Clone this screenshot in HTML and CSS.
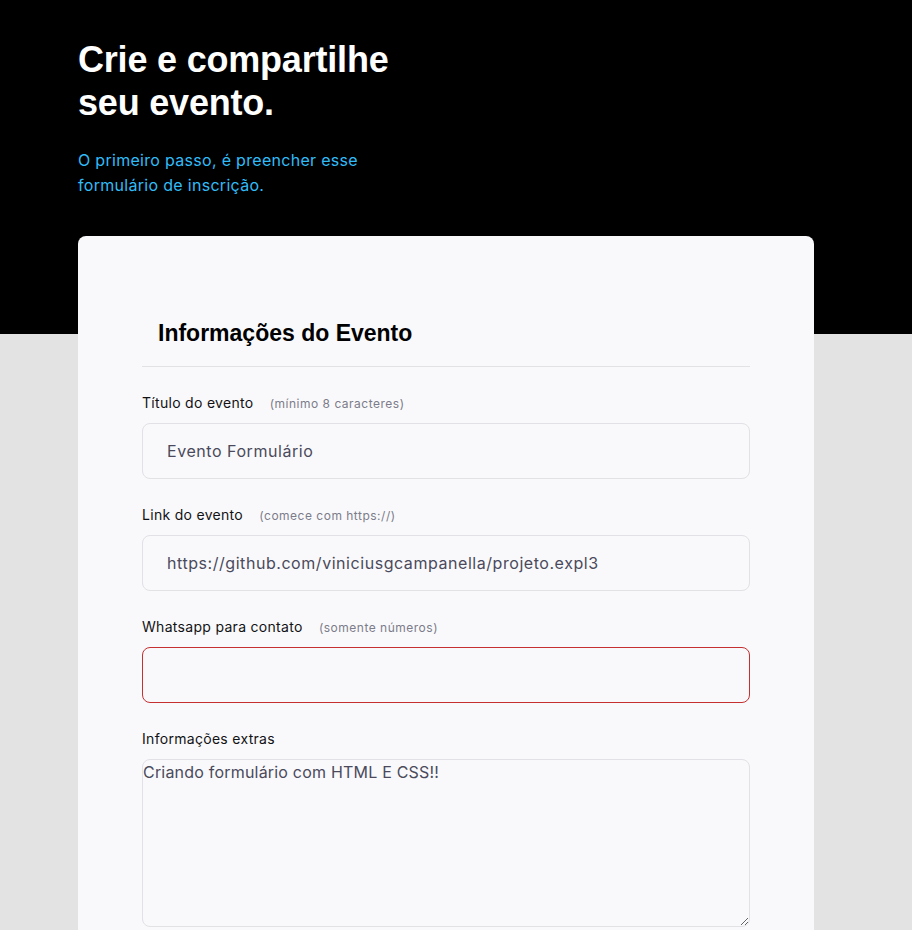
FILE: index.html
```html
<!DOCTYPE html>
<html lang="pt-BR">
<head>
<meta charset="utf-8">
<title>Crie e compartilhe seu evento</title>
<link rel="stylesheet" href="styles.css">
</head>
<body>
<header class="hero">
  <div class="hero-inner">
    <h1 class="hero-title">Crie e compartilhe<br>seu evento.</h1>
    <p class="hero-sub">O primeiro passo, é preencher esse<br>formulário de inscrição.</p>
  </div>
</header>
<main class="page">
  <form class="card">
    <h2 class="card-title">Informações do Evento</h2>
    <div class="fields">
      <div class="field">
        <label class="label" for="titulo">Título do evento <span class="hint">(mínimo 8 caracteres)</span></label>
        <input class="input" id="titulo" type="text" value="Evento Formulário">
      </div>
      <div class="field">
        <label class="label" for="link">Link do evento <span class="hint">(comece com https://)</span></label>
        <input class="input" id="link" type="text" value="https://github.com/viniciusgcampanella/projeto.expl3">
      </div>
      <div class="field">
        <label class="label" for="whats">Whatsapp para contato <span class="hint">(somente números)</span></label>
        <input class="input input-error" id="whats" type="text" value="">
      </div>
      <div class="field">
        <label class="label" for="extras">Informações extras</label>
        <textarea class="textarea" id="extras">Criando formulário com HTML E CSS!!</textarea>
      </div>
    </div>
  </form>
</main>
</body>
</html>
```
FILE: styles.css
```css
* { box-sizing: border-box; }
html, body { margin: 0; padding: 0; }
body {
  background: #e3e3e3;
  font-family: Inter, "Noto Sans", sans-serif;
  color: #121214;
}
.hero {
  background: #000;
  height: 334px;
}
.hero-inner {
  padding: 38px 78px 0;
}
.hero-title {
  margin: 0;
  font-family: "Liberation Sans", Arial, sans-serif;
  font-weight: 700;
  font-size: 36px;
  line-height: 43px;
  color: #fff;
  letter-spacing: -0.2px;
}
.hero-sub {
  margin: 24px 0 0;
  font-size: 16px;
  line-height: 25px;
  letter-spacing: 0.3px;
  color: #32bcf7;
}
.page {
  margin-top: -98px;
  padding: 0 98px 0 78px;
}
.card {
  background: #f9f9fb;
  border-radius: 8px;
  padding: 64px 64px 64px;
  height: 800px;
}
.card-title {
  margin: 0;
  padding: 16px 16px 16px;
  font-family: "Liberation Sans", Arial, sans-serif;
  font-size: 23px;
  line-height: 34px;
  font-weight: 700;
  color: #000;
  border-bottom: 1px solid #e1e1e6;
}
.fields {
  display: flex;
  flex-direction: column;
  gap: 25px;
  padding-top: 25px;
}
.field {
  display: flex;
  flex-direction: column;
  gap: 10px;
}
.label {
  display: block;
  height: 21px;
  font-size: 14px;
  line-height: 21px;
  letter-spacing: 0.3px;
  color: #121214;
  white-space: nowrap;
}
.hint {
  margin-left: 12px;
  font-size: 12px;
  line-height: 1;
  letter-spacing: 0.5px;
  color: #7c7c8a;
}
.input {
  display: block;
  height: 56px;
  width: 100%;
  border: 1px solid #e1e1e6;
  border-radius: 8px;
  background: #f9f9fb;
  padding: 0 24px;
  font-family: Inter, "Noto Sans", sans-serif;
  font-size: 16px;
  letter-spacing: 0.55px;
  color: #4a4a5c;
  outline: none;
}
.input-error {
  border-color: #c53030;
}
.textarea {
  display: block;
  height: 168px;
  width: 100%;
  border: 1px solid #e1e1e6;
  border-radius: 8px;
  background: #f9f9fb;
  padding: 0;
  font-family: Inter, "Noto Sans", sans-serif;
  font-size: 16px;
  line-height: 24px;
  letter-spacing: 0.2px;
  color: #4a4a5c;
  resize: vertical;
}
```
